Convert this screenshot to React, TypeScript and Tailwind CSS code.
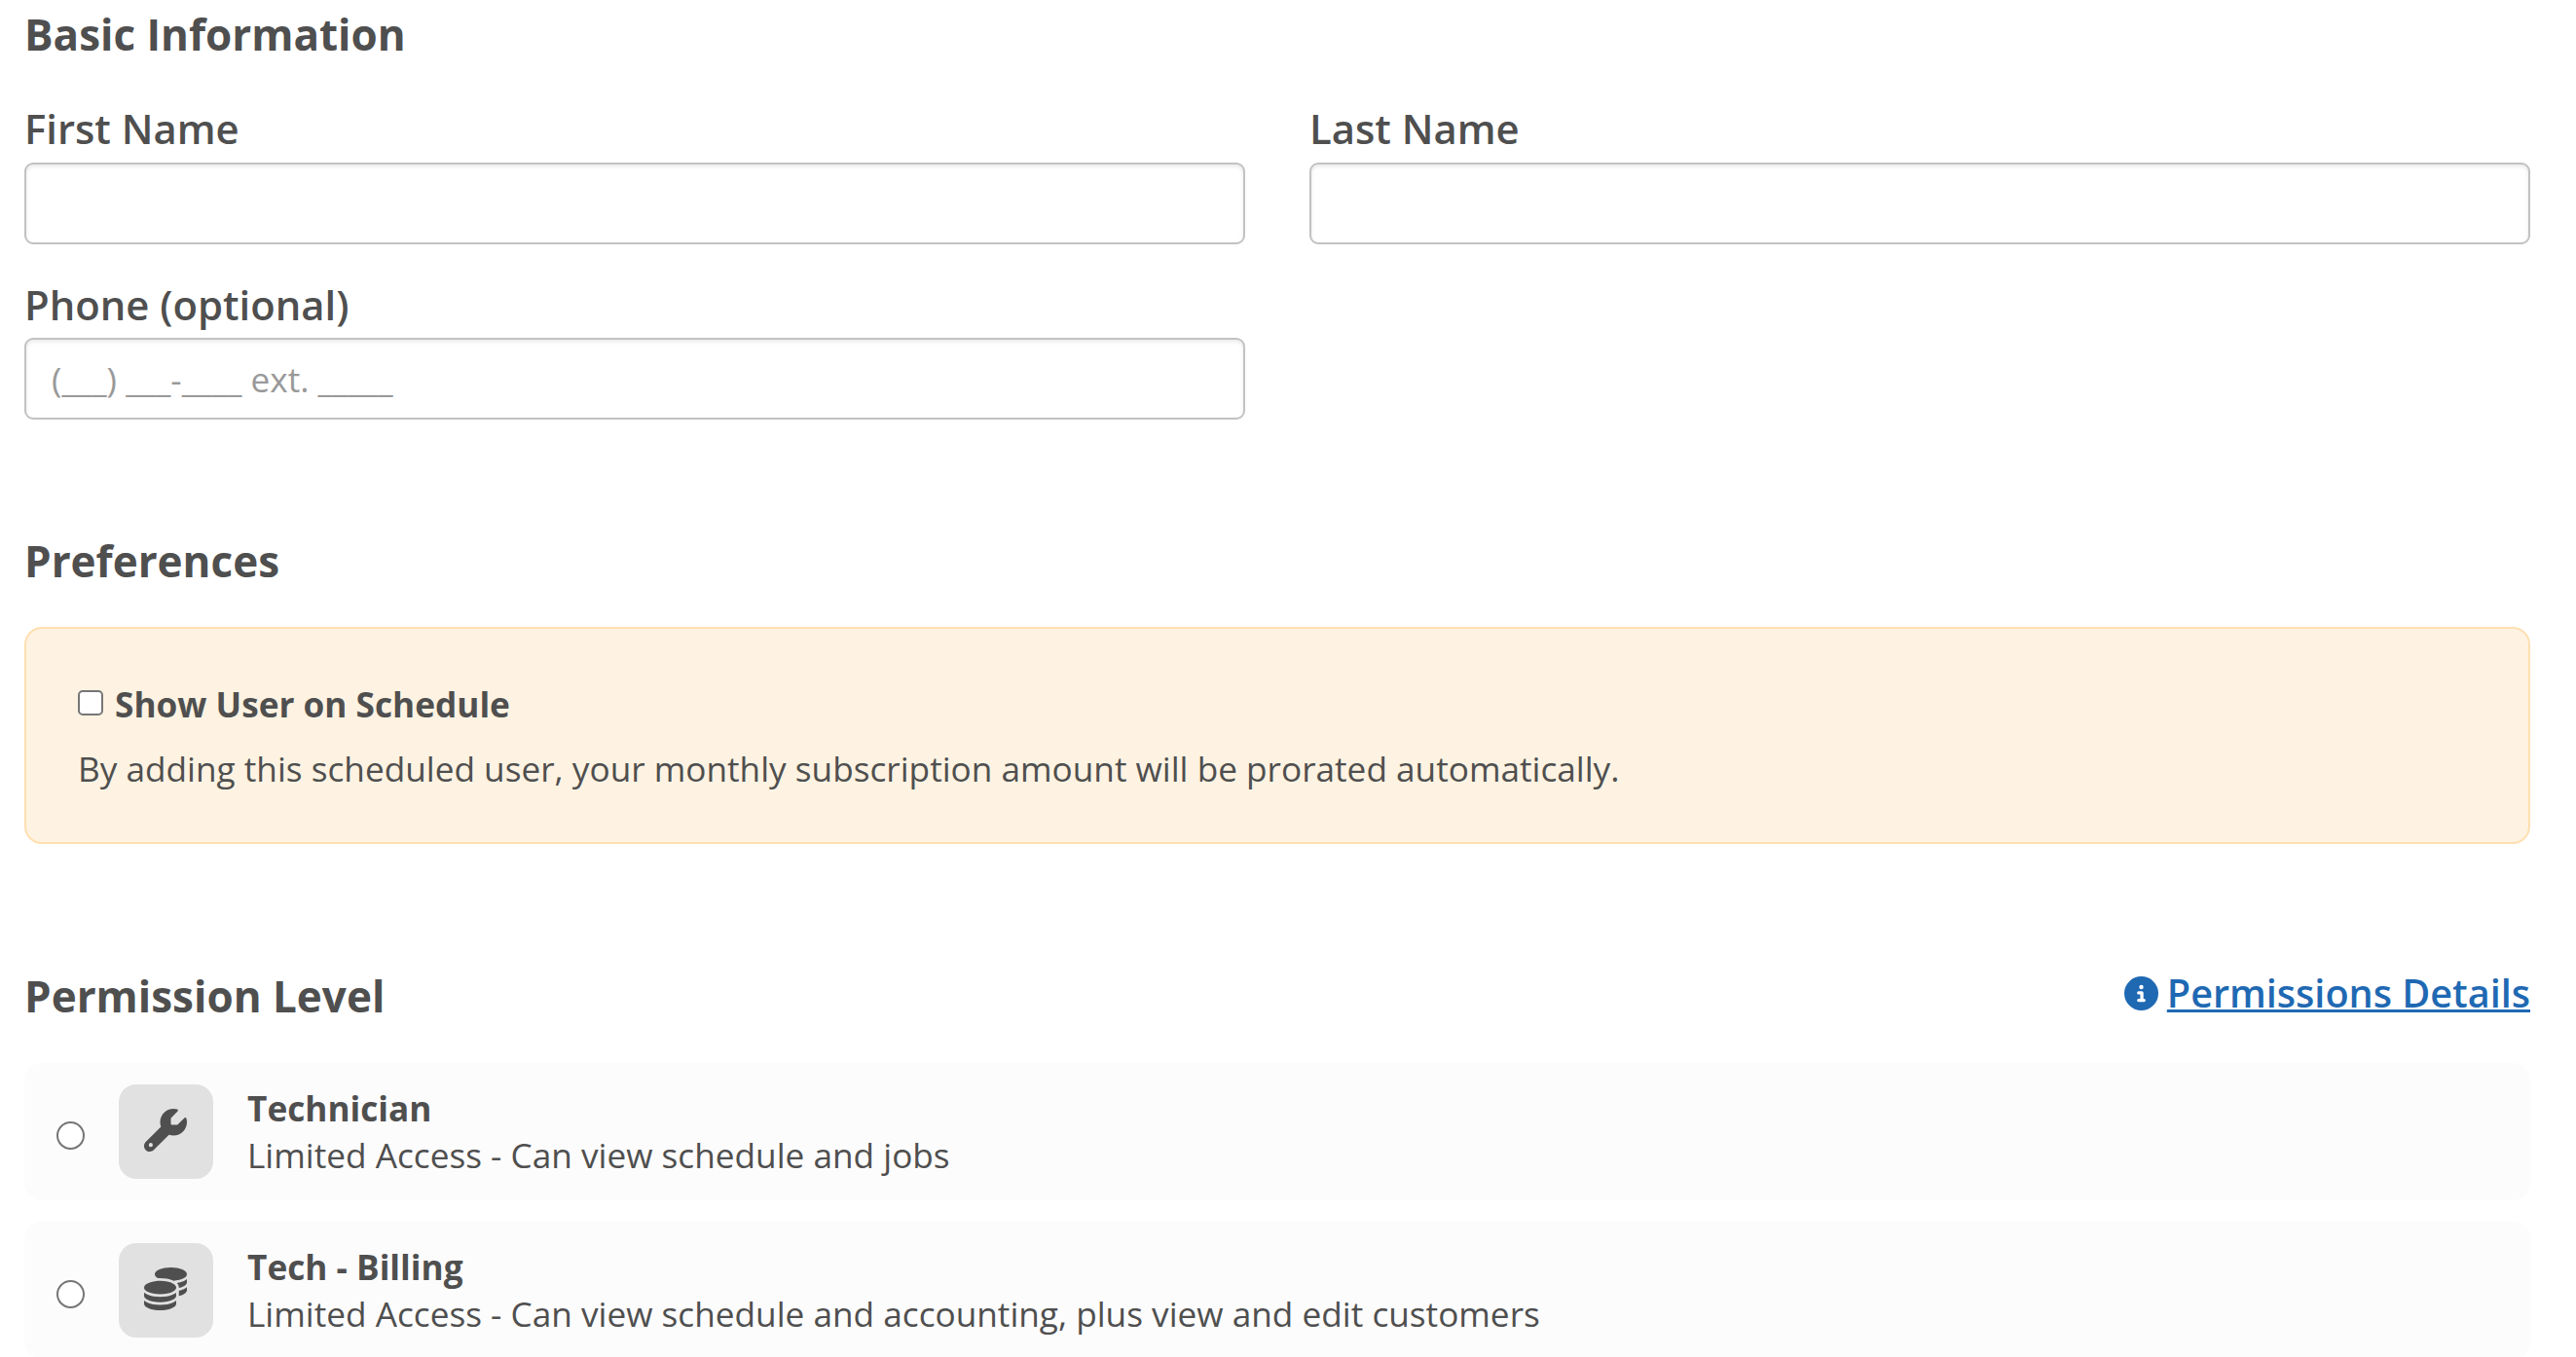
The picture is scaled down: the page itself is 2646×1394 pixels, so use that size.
import { useState } from "react";
import type { IconType } from "react-icons";
import { FaCircleInfo, FaCoins, FaWrench } from "react-icons/fa6";

interface PermissionLevel {
  id: string;
  title: string;
  description: string;
  icon: IconType;
}

const permissionLevels: PermissionLevel[] = [
  {
    id: "technician",
    title: "Technician",
    description: "Limited Access - Can view schedule and jobs",
    icon: FaWrench,
  },
  {
    id: "tech-billing",
    title: "Tech - Billing",
    description: "Limited Access - Can view schedule and accounting, plus view and edit customers",
    icon: FaCoins,
  },
];

function SectionTitle({ children }: { children: string }) {
  return <h2 className="text-[44px] leading-[60px] font-bold">{children}</h2>;
}

function TextField({ id, label, placeholder }: { id: string; label: string; placeholder?: string }) {
  return (
    <div className="flex flex-col gap-[6.5px]">
      <label htmlFor={id} className="text-[41.8px] leading-[56px] font-semibold">{label}</label>
      <input
        id={id}
        type="text"
        placeholder={placeholder}
        className="h-[84px] w-full rounded-[9px] border-2 border-[#c2c2c2] bg-white px-[26px] text-[35.2px] shadow-[inset_0_2px_4px_rgba(0,0,0,0.09)] outline-none placeholder:text-[#999999]"
      />
    </div>
  );
}

export default function App() {
  const [showOnSchedule, setShowOnSchedule] = useState(false);
  const [level, setLevel] = useState("");

  return (
    <div className="h-screen overflow-hidden bg-white pt-[5px] pr-[47px] pl-[25px] font-['Open_Sans','Noto_Sans',sans-serif] text-[#4f4f4f]">
      {/* Basic information */}
      <section>
        <SectionTitle>Basic Information</SectionTitle>
        <div className="mt-[39.3px] grid grid-cols-2 gap-x-[66px] gap-y-[33.8px]">
          <TextField id="first-name" label="First Name" />
          <TextField id="last-name" label="Last Name" />
          <TextField id="phone" label="Phone (optional)" placeholder="(___) ___-____ ext. _____" />
        </div>
      </section>

      {/* Preferences */}
      <section className="mt-[114.9px]">
        <SectionTitle>Preferences</SectionTitle>
        <div className="mt-[38px] h-[223px] rounded-[18px] border-2 border-[#ffdfb0] bg-[#fef3e2] px-[53px] py-[52px] text-[35.2px] leading-[50px]">
          <label className="flex items-center gap-3 font-bold">
            <input
              type="checkbox"
              checked={showOnSchedule}
              onChange={e => setShowOnSchedule(e.target.checked)}
              className="-mt-px size-[26px] shrink-0 appearance-none rounded-[5px] border-2 border-[#767676] bg-white checked:bg-[#1f69b3]"
            />
            Show User on Schedule
          </label>
          <p className="mt-4">By adding this scheduled user, your monthly subscription amount will be prorated automatically.</p>
        </div>
      </section>

      {/* Permission level */}
      <section className="mt-[126px]">
        <div className="flex items-start justify-between">
          <SectionTitle>Permission Level</SectionTitle>
          <a href="#permissions" className="flex items-center gap-[9px] text-[39.6px] leading-[54px] font-semibold text-[#1f69b3]">
            <FaCircleInfo className="mt-0.5 size-[35px]" />
            <span className="underline decoration-[3px] underline-offset-[2px] [text-decoration-skip-ink:none]">Permissions Details</span>
          </a>
        </div>
        <div className="mt-[39px] flex flex-col gap-[22px]">
          {permissionLevels.map(({ id, title, description, icon: Icon }) => (
            <label key={id} className="flex h-[141px] items-center rounded-[18px] bg-[#fcfcfc] pl-[33px]">
              <input
                type="radio"
                name="permission"
                value={id}
                checked={level === id}
                onChange={() => setLevel(id)}
                className="mt-2 size-[29px] shrink-0 appearance-none rounded-full border-2 border-[#767676] bg-white checked:border-8"
              />
              <span className="ml-[35px] flex size-[97px] shrink-0 items-center justify-center rounded-[18px] bg-[#e1e1e1]">
                <Icon className="mr-px mb-0.5 size-11" />
              </span>
              <span className="mb-px ml-[35px] text-[35.2px] leading-[48px]">
                <span className="block font-bold">{title}</span>
                <span className="block">{description}</span>
              </span>
            </label>
          ))}
        </div>
      </section>
    </div>
  );
}
